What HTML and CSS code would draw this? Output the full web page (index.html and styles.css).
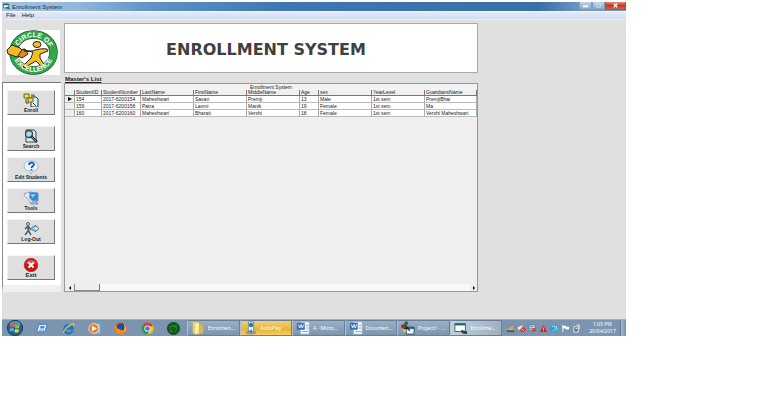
FILE: index.html
```
<!DOCTYPE html>
<html lang="en">
<head>
<meta charset="utf-8">
<title>Enrollment System</title>
<link rel="stylesheet" href="styles.css">
</head>
<body>
<div class="desktop">
  <header class="titlebar">
    <svg class="app-icon" viewBox="0 0 16 16"><path fill="#fff" stroke="#245" stroke-width="1.5" d="M1 2h12v9H1z"/><path fill="#176b6b" d="M1 2h12v3H1zM8 8l7 3v4l-8-3z"/></svg>
    <h1 class="title">Enrollment System</h1>
    <div class="window-controls">
      <button class="control" aria-label="Minimize"><svg viewBox="0 0 12 8"><path d="M3 5h6" stroke="#fff" stroke-width="2"/></svg></button>
      <button class="control" aria-label="Maximize"><svg viewBox="0 0 12 8"><path d="M4 2h4v4H4z" fill="none" stroke="#d5e2ee"/></svg></button>
      <button class="control close" aria-label="Close"><svg viewBox="0 0 20 8"><path d="M8 2l4 4M12 2l-4 4" stroke="#fff" stroke-width="1.5"/></svg></button>
    </div>
  </header>
  <nav class="menubar"><button class="menu">File</button><button class="menu">Help</button></nav>

  <main class="client">
    <aside class="side">
      <svg class="logo" viewBox="0 0 54 45" role="img" aria-label="Circle of Excellence">
        <defs><path id="top-arc" d="M11.500 22a16 15 0 0 1 32 0"/><path id="bottom-arc" d="M7 22a20.500 20 0 0 0 41 0"/></defs>
        <path fill="#fff" d="M0 0h54v45H0z"/>
        <ellipse cx="27.500" cy="22.500" rx="20" ry="18" fill="#fff" stroke="#173d20" stroke-width="8.500"/>
        <ellipse cx="27.500" cy="22.500" rx="20" ry="18" fill="none" stroke="#2fa648" stroke-width="7.500"/>
        <path d="M11 20l8-1 3 5-6 4-6-3z" fill="#e28a18" stroke="#222"/>
        <path d="M1 20l5-5 8 3 2 2-5 7-9-3z" fill="#f4b925" stroke="#222"/>
        <ellipse cx="31" cy="14.500" rx="4" ry="3" fill="#f7bd20" stroke="#222"/>
        <path d="M18 20q8 2 11 0 7-2 12-1l1 2-8 3 0 4 5 8-2 2-7-7-7 4-4 3-2-2 8-8 2-6-9-1z" fill="#f7bd20" stroke="#222"/>
        <text class="logo-text"><textPath href="#top-arc" startOffset="6">CIRCLE OF</textPath></text>
        <text class="logo-text"><textPath href="#bottom-arc" startOffset="8">EXCELLENCE</textPath></text>
      </svg>
      <nav class="toolbar">
        <button class="tool"><svg viewBox="0 0 16 14"><path d="M8 4h5l2 2v8H8z" fill="#d5f0fb" stroke="#263f4b"/><path d="M1 1h5v4H1zM5 5h5v4H5z" fill="#f8df38" stroke="#75670d"/><path d="M3 6v4h3M8 2h3v2M10 10l3 3" fill="none" stroke="#444"/></svg><span>Enroll</span></button>
        <div class="tool-group">
          <button class="tool"><svg viewBox="0 0 16 14"><path d="M3 1h8l2 2v10H3z" fill="#d8edf0" stroke="#39484b"/><circle cx="6" cy="5" r="3.500" fill="#a7dbe8" stroke="#28434f" stroke-width="1.300"/><path d="M8 7l6 6" stroke="#343232" stroke-width="2.500"/><path d="M9 8l4 4" stroke="#c98a43"/></svg><span>Search</span></button>
          <button class="tool"><svg viewBox="0 0 16 14"><path d="M8 1c9 0 9 10 2 10l-2 3-1-3C-1 11-1 1 8 1z" fill="#e7f3fc" stroke="#9bb9d1"/><path d="M6 5c0-3 5-3 5-.5C11 6 8.500 6 8.500 8M8.500 9v1.500" fill="none" stroke="#164fb0" stroke-width="1.700"/></svg><span>Edit Students</span></button>
          <button class="tool"><svg viewBox="0 0 16 14"><path d="M6 1l9 1v8l-9-1z" fill="#278be0" stroke="#6c94bd"/><path d="M8 3l5 .5L9 7z" fill="#8ed2ff"/><path d="M7 11h7l1 2H8z" fill="#b7cbe0" stroke="#7d91a6"/><path d="M1 2l2 1 1-2q3 0 3 3L6 6l4 5-2 1-4-5Q1 6 1 2z" fill="#e6edf2" stroke="#8397aa" stroke-width=".7"/></svg><span>Tools</span></button>
          <button class="tool"><svg viewBox="0 0 16 14"><circle cx="5" cy="2" r="1.500" fill="#cfe6ee" stroke="#45606b"/><path d="M5 4l-3 3M5 4v5l-3 4M5 8l3 5M5 4l3 4" fill="none" stroke="#45606b" stroke-width="1.500"/><path d="M9 5h3V3l4 3.500-4 3.500V8H9z" fill="#c8eef9" stroke="#3e7a90"/></svg><span>Log-Out</span></button>
        </div>
        <button class="tool exit"><svg viewBox="0 0 16 14"><circle cx="8" cy="7" r="6.800" fill="#d01119" stroke="#8d171b" stroke-width=".5"/><path d="M2.500 5a6 5 0 0 1 11 0q-5 3-11 0z" fill="#e95355"/><path d="M5.500 4.500l5 5M10.500 4.500l-5 5" stroke="#fff" stroke-width="2"/></svg><span>Exit</span></button>
      </nav>
    </aside>

    <section class="content">
      <div class="banner"><h2>ENROLLMENT SYSTEM</h2></div>
      <h3 class="list-title">Master's List</h3>
      <div class="grid-panel">
        <table class="students">
          <caption>Enrollment System</caption>
          <colgroup><col class="c-mark"><col class="c-id"><col class="c-number"><col class="c-name"><col class="c-name"><col class="c-name"><col class="c-age"><col class="c-name"><col class="c-name"><col></colgroup>
          <thead><tr><th></th><th>StudentID</th><th>StudentNumber</th><th>LastName</th><th>FirstName</th><th>MiddleName</th><th>Age</th><th>sex</th><th>YearLevel</th><th>GuardiansName</th></tr></thead>
          <tbody>
            <tr><th><svg class="marker" viewBox="0 0 4 4"><path d="M0 0l4 2-4 2z"/></svg></th><td>154</td><td>2017-6200154</td><td>Maheshwari</td><td>Savan</td><td>Premji</td><td>13</td><td>Male</td><td>1st sem</td><td>PremjiBhai</td></tr>
            <tr><th></th><td>159</td><td>2017-6200158</td><td>Patra</td><td>Laxmi</td><td>Manik</td><td>19</td><td>Female</td><td>1st sem</td><td>Ma</td></tr>
            <tr><th></th><td>160</td><td>2017-6200160</td><td>Maheshwari</td><td>Bharati</td><td>Vershi</td><td>18</td><td>Female</td><td>1st sem</td><td>Vershi Maheshwari</td></tr>
          </tbody>
        </table>
        <div class="scrollbar">
          <button class="arrow" aria-label="Scroll left"><svg viewBox="0 0 4 4"><path d="M3 0v4L1 2z"/></svg></button>
          <div class="thumb"></div>
          <button class="arrow end" aria-label="Scroll right"><svg viewBox="0 0 4 4"><path d="M1 0v4l2-2z"/></svg></button>
        </div>
      </div>
    </section>
  </main>

  <footer class="taskbar">
    <div class="launchers">
      <button class="launch start" aria-label="Start"><svg viewBox="0 0 16 16"><circle cx="8" cy="8" r="7.700" fill="#24628c" stroke="#173d5b"/><ellipse cx="8" cy="4" rx="5.500" ry="3" fill="#82b1cf" opacity=".6"/><path d="M3.500 4.500q2-1 4 0L7 7.500q-2-1-4 0z" fill="#f05a28"/><path d="M8.500 5q2 1 4 0l-.5 3q-2 1-4 0z" fill="#8cc63f"/><path d="M3 8.500q2-1 4 0l-.5 3q-2-1-4 0z" fill="#42b3ed"/><path d="M8 9q2 1 4 0l-.5 3q-2 1-4 0z" fill="#ffcf32"/></svg></button>
      <button class="launch" aria-label="Windows"><svg viewBox="0 0 16 16"><path d="M5 3h10l-3 9H2z" fill="#e9f4ff" stroke="#3970bd"/><path d="M7 5h5l-1 3H6z" fill="#4c86d3"/><path d="M5 10h6" stroke="#4c86d3"/></svg></button>
      <button class="launch" aria-label="Internet Explorer"><svg viewBox="0 0 16 16"><path d="M13 10.500A5.200 5.200 0 1 1 13.200 8H5" fill="none" stroke="#1479c9" stroke-width="2.800"/><path d="M1.500 14C0 11 9 0 15 2c1.500 1-.5 4-1 4 1-4-4-2-8 2s-3 5-4.500 6z" fill="#f2c43c"/></svg></button>
      <button class="launch" aria-label="Media Player"><svg viewBox="0 0 16 16"><path d="M5 2h10v12H5z" fill="#8bc5eb"/><circle cx="7" cy="8" r="6" fill="#f47a20" stroke="#fff" stroke-width=".8"/><path d="M5 4.500l6 3.500-6 3.500z" fill="#fff"/></svg></button>
      <button class="launch" aria-label="Firefox"><svg viewBox="0 0 16 16"><circle cx="8" cy="8" r="7.500" fill="#e8661b"/><circle cx="8.500" cy="6.500" r="5" fill="#264c91"/><path d="M1 4q3 1 3 4 3 0 5 2 3 1 5-4 2 4-1 7-5 5-10 0Q0 9 1 4z" fill="#f48a1f"/><path d="M12 2q3 3 3 7l-2 3q1-5-1-10z" fill="#ffd22e"/></svg></button>
      <button class="launch" aria-label="Chrome"><svg viewBox="0 0 16 16"><circle cx="8" cy="8" r="7.500" fill="#fbc116"/><path d="M8 8L1.500 4.250A7.500 7.500 0 0 1 14.500 4.250z" fill="#df3a2e"/><path d="M8 8L1.500 4.250A7.500 7.500 0 0 0 8 15.500l3-6z" fill="#239b50"/><circle cx="8" cy="8" r="3.800" fill="#fff"/><circle cx="8" cy="8" r="2.900" fill="#3979df"/></svg></button>
      <button class="launch" aria-label="Network Radar"><svg viewBox="0 0 16 16"><circle cx="8" cy="8" r="7.500" fill="#086012" stroke="#153c16"/><circle cx="8" cy="8" r="4" fill="none" stroke="#2a9a32" stroke-width=".7"/><path d="M8 8l5-5M3 6q4-2 8 0" fill="none" stroke="#2a9b34" stroke-width=".8"/><circle cx="5" cy="11" r="1.200" fill="#e33b2c"/></svg></button>
    </div>
    <div class="tasks">
      <button class="task"><svg viewBox="0 0 16 16"><path d="M2 1h5l2 2v12H4L2 13z" fill="#f0cf65"/><path d="M5 3l4-1v11l-4 2z" fill="#fff0ab"/><path d="M9 4h5v10l-5 1z" fill="#ddb64c"/></svg><span>Enrolmen...</span></button>
      <button class="task highlight"><svg viewBox="0 0 16 16"><ellipse cx="8" cy="13" rx="6" ry="2.500" fill="#9a9a8e"/><path d="M5 1h6v11H5z" fill="#eef7fc" stroke="#658ba6"/><circle cx="8" cy="4.500" r="2.500" fill="#2476c8"/><path d="M5 12l4-3v5z" fill="#3a7cae"/></svg><span>AutoPlay</span></button>
      <button class="task"><svg viewBox="0 0 16 16"><path d="M5 1h10v14H5z" fill="#f5faff" stroke="#96b8df"/><path d="M11 5h3M11 8h3M7 12h7" stroke="#7da3d3"/><path d="M1 2h9v8H1z" fill="#396fb8"/><path d="M3 4l1 4 2-4 1 4 2-4" fill="none" stroke="#fff"/></svg><span>A - Micro...</span></button>
      <button class="task"><svg viewBox="0 0 16 16"><path d="M5 1h10v14H5z" fill="#f5faff" stroke="#96b8df"/><path d="M11 5h3M11 8h3M7 12h7" stroke="#7da3d3"/><path d="M1 2h9v8H1z" fill="#396fb8"/><path d="M3 4l1 4 2-4 1 4 2-4" fill="none" stroke="#fff"/></svg><span>Documen...</span></button>
      <button class="task"><svg viewBox="0 0 16 16"><path d="M6 7h9v8H6z" fill="#e9f1f2" stroke="#24494d"/><path d="M6 7h9v2H6z" fill="#2058a0"/><path d="M4 4l6 7M3 8l6 1" stroke="#222" stroke-width="1.500"/><circle cx="6" cy="2.500" r="2.200" fill="#187635"/><circle cx="2.500" cy="6" r="2.300" fill="#b3202b"/><circle cx="4" cy="11" r="2" fill="#e0c52c"/></svg><span>Project1 - ...</span></button>
      <button class="task active"><svg viewBox="0 0 16 16"><path d="M1 3h12v9H1z" fill="#fff" stroke="#315b5c"/><path d="M1 3h12v2H1z" fill="#176969"/><path d="M8 10l7 2v3l-6-1z" fill="#25484c"/></svg><span>Enrollme...</span></button>
    </div>
    <div class="tray">
      <svg viewBox="0 0 10 10"><path d="M1 6l7-4v5H1z" fill="#e1ad3c"/><path d="M1 7h8v2H1z" fill="#4f5356"/></svg>
      <svg viewBox="0 0 10 10"><path d="M1 3h2l3-2v7L3 6H1z" fill="#edf0f3"/><circle cx="6.500" cy="6.500" r="2.800" fill="#d83434"/><path d="M5 5l3 3" stroke="#fff"/></svg>
      <svg viewBox="0 0 10 10"><path d="M1 1h7v6H1z" fill="#d7e8f5" stroke="#547ca0"/><circle cx="6.500" cy="6.500" r="2.300" fill="#df4038"/><path d="M2 3h4M2 5h2" stroke="#4777a2"/></svg>
      <svg viewBox="0 0 10 10"><path d="M5 1l4 8H1z" fill="#d9231d"/><path d="M5 4v2M5 7v1" stroke="#fff"/></svg>
      <svg viewBox="0 0 10 10"><circle cx="5" cy="5" r="4.500" fill="#2999dd"/><path d="M2 3l3-1 1 3-3 3M7 2l1 4-2 2" fill="none" stroke="#bce8ff"/></svg>
      <svg viewBox="0 0 10 10"><path d="M2 1v8" stroke="#eef3f7"/><path d="M2 2h3l1 1h3v3H6L5 5H2z" fill="#fff"/></svg>
      <svg viewBox="0 0 10 10"><path d="M2 3h5v6H2z" fill="#687989" stroke="#e9eff3"/><path d="M5 1h3v5M4 5h2" fill="none" stroke="#e9eff3"/></svg>
    </div>
    <div class="clock"><span>1:05 PM</span><span>20/04/2017</span></div>
    <button class="show-desktop" aria-label="Show desktop"></button>
  </footer>
</div>
</body>
</html>
```
FILE: styles.css
```
* { box-sizing: border-box; }
body {
  margin: 0;
  padding: 2px 151px 0 2px;
  background: #fff;
  color: #222;
  font: 5px/6px "Liberation Sans", sans-serif;
}
h1, h2, h3 { margin: 0; }
button {
  margin: 0;
  padding: 0;
  border: 0;
  background: none;
  color: inherit;
  font: inherit;
}
svg { display: block; flex: none; }
.desktop { background: #e0e0e0; }

.titlebar {
  display: flex;
  align-items: center;
  height: 9px;
  padding-left: 1px;
  background: linear-gradient(90deg, #a2c4e3 0%, #91b7da 12%, #5e93c5 24%, #3c77b2 45%, #396fa9 86%, #7199c4 93%);
}
.app-icon { width: 7px; height: 7px; }
.title {
  margin-left: 2px;
  color: #1c2b3b;
  font-size: 6px;
  font-weight: 400;
  line-height: 8px;
}
.window-controls { display: flex; align-self: flex-start; margin-left: auto; }
.control {
  width: 13px;
  height: 8px;
  border: 1px solid #7c9cbd;
  border-top: 0;
  background: linear-gradient(#c3d4e6, #88a9c8);
}
.control svg { width: 100%; height: 7px; }
.control.close { width: 21px; border-color: #a6544b; background: linear-gradient(#dd9384, #c93520 50%, #d45f3e); }
.menubar {
  display: flex;
  gap: 6px;
  height: 9px;
  padding: 0 4px;
  border-top: 1px solid #f3f6fc;
  border-bottom: 1px solid #edf0f6;
  background: linear-gradient(#e4eaf8, #d2dcf0);
}
.menu { font-size: 6px; line-height: 7px; }

.client {
  display: flex;
  gap: 3px;
  padding: 3px 148px 27px 0;
}
.side { width: 59px; flex: none; padding-top: 7px; }
.logo { width: 54px; height: 45px; margin-left: 4px; }
.logo-text { fill: #fff; font: bold 7px "Liberation Sans", sans-serif; }
.toolbar {
  display: flex;
  flex-direction: column;
  gap: 11px;
  margin-top: 7px;
  padding: 7px 6px 5px 4px;
  border-top: 1px solid #777;
  border-left: 1px solid #888;
  border-bottom: 7px solid #f0f0f0;
  background: #fff;
}
.tool-group { display: flex; flex-direction: column; gap: 6px; }
.tool {
  display: flex;
  flex-direction: column;
  align-items: center;
  justify-content: flex-end;
  width: 100%;
  height: 25px;
  padding-bottom: 1px;
  border: 1px solid;
  border-color: #f5f5f5 #777 #777 #f0f0f0;
  background: #dfdfdf;
  font-weight: 700;
}
.tool svg { width: 16px; height: 14px; }
.tool.exit { font-size: 6px; }
.content { flex: 1; min-width: 0; display: flex; flex-direction: column; }
.banner {
  display: flex;
  align-items: center;
  justify-content: center;
  height: 50px;
  padding: 4px 10px 0 0;
  border: 1px solid #aaa;
  background: #fff;
}
.banner h2 {
  color: #404040;
  font: bold 16px/20px "DejaVu Sans", sans-serif;
  white-space: nowrap;
}
.list-title {
  height: 10px;
  padding: 2px 1px 0;
  font-size: 6px;
  line-height: 8px;
  text-decoration: underline;
}
.grid-panel {
  flex: 1;
  display: flex;
  flex-direction: column;
  justify-content: space-between;
  border: 1px solid #999;
  background: #efefef;
}
.students {
  width: 100%;
  table-layout: fixed;
  border-collapse: separate;
  border-spacing: 0;
}
.students caption { height: 6px; line-height: 6px; background: #f3f3f3; }
.c-mark { width: 10px; }
.c-id { width: 27px; }
.c-number { width: 39px; }
.c-name { width: 53px; }
.c-age { width: 19px; }
.students th, .students td {
  height: 7px;
  padding: 0 1px;
  border-right: 1px solid #aaa;
  border-bottom: 1px solid #bbb;
  line-height: 6px;
  font-weight: 400;
  text-align: left;
  white-space: nowrap;
}
.students td { background: #fff; }
.students thead th { height: 6px; border-color: #777; line-height: 5px; }
.marker { width: 4px; height: 4px; margin-left: 2px; }
.scrollbar { display: flex; height: 7px; background: #f9f9f9; }
.arrow { display: grid; place-items: center; width: 10px; border-right: 1px solid #888; background: #eee; }
.arrow.end { width: 7px; margin-left: auto; border: 0; }
.arrow svg { width: 4px; height: 4px; }
.thumb { width: 25px; border-right: 1px solid #777; border-bottom: 1px solid #888; background: #eee; }

.taskbar {
  display: flex;
  height: 17px;
  background: #7b95b1;
  color: #fff;
  font-family: "Noto Sans", sans-serif;
  border-top: 1px solid #a0b0c0;
}
.launchers { display: flex; width: 185px; }
.launch { flex: 1; display: grid; place-items: center; }
.launch svg { width: 13px; height: 13px; }
.launch.start svg { width: 16px; height: 16px; }
.tasks { display: flex; flex: 1; }
.task {
  flex: 1;
  display: flex;
  align-items: center;
  gap: 3px;
  min-width: 0;
  padding-left: 3px;
  border: 1px solid #667f9a;
  border-left-color: #b1c0cf;
  background: linear-gradient(#9bafc4, #7c95ad);
  white-space: nowrap;
}
.task svg { width: 14px; height: 14px; }
.task.highlight { background: linear-gradient(#efd07a, #e7b437 60%, #f2ce62); }
.task.active { background: linear-gradient(110deg, #c5d1dc, #9cafbf); }
.tray { display: flex; align-items: center; gap: 2px; padding: 0 4px; }
.tray svg { width: 9px; height: 9px; }
.clock {
  display: flex;
  flex-direction: column;
  justify-content: center;
  width: 35px;
  text-align: center;
  line-height: 7px;
}
.show-desktop { width: 6px; border-left: 1px solid #5e7895; background: linear-gradient(90deg, #a8bacb, #7690ab); }
```
